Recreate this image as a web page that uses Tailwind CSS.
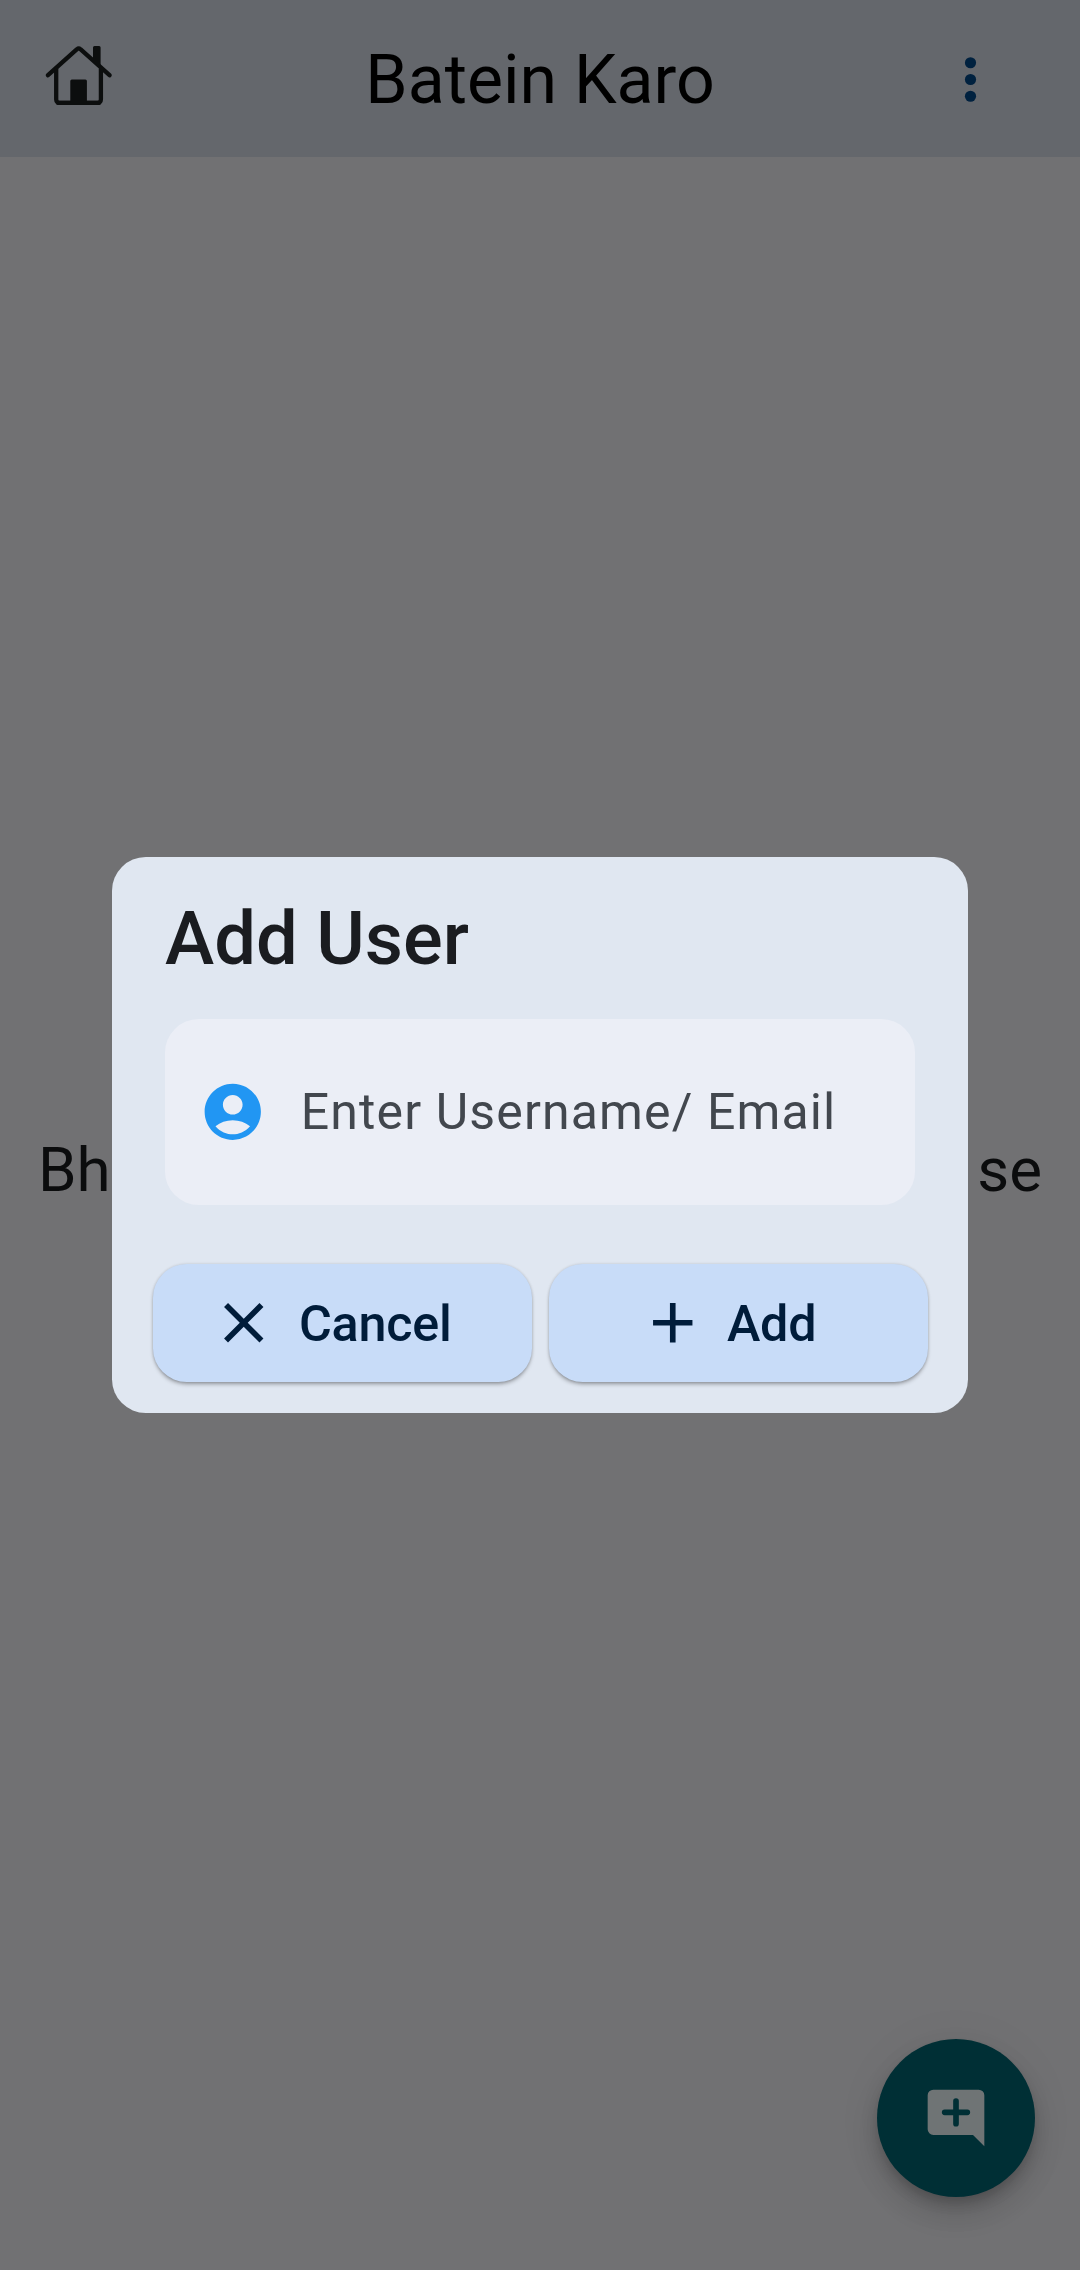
<!DOCTYPE html>
<html lang="en">
<head>
<meta charset="utf-8">
<title>Batein Karo</title>
<script src="https://cdn.jsdelivr.net/npm/@tailwindcss/browser@4"></script>
</head>
<body class="bg-[#717173] font-[Roboto,sans-serif]">
<div class="relative flex h-[2270px] w-[1080px] flex-col overflow-hidden">
  <header class="grid h-[157px] shrink-0 grid-cols-[1fr_auto_1fr] items-center bg-[#64676c]">
    <svg class="ml-[45px] -mt-[6px] size-[68px]" viewBox="45 42 68 68" fill="none" stroke="#0c0e0e" stroke-width="4.3" stroke-linecap="round" stroke-linejoin="round">
      <path d="M48 75.2 77 49.2Q78.7 47.6 80.4 49.2L109.5 75.2"/>
      <path d="M56.2 69v30.5a3.4 3.4 0 0 0 3.4 3.4h37.9a3.4 3.4 0 0 0 3.4-3.4V69"/>
      <path d="M58 102.900H99"/>
      <path fill="#0c0e0e" stroke="none" d="M93 60V47.5a1.5 1.5 0 0 1 1.500-1.500h4.600a1.500 1.500 0 0 1 1.500 1.500V67zM70.300 103V81a1.500 1.500 0 0 1 1.500-1.500h13.600a1.500 1.500 0 0 1 1.500 1.500v22z"/>
    </svg>
    <h1 class="mt-[2px] text-[68px] leading-none text-black">Batein Karo</h1>
    <svg class="mt-[1px] mr-[76px] size-[67px] justify-self-end" viewBox="0 0 24 24" fill="#00213f"><circle cx="12" cy="6" r="2"/><circle cx="12" cy="12" r="2"/><circle cx="12" cy="18" r="2"/></svg>
  </header>
  <main class="flex grow items-center justify-between px-[38px]">
    <span class="-mt-[86px] text-[61.9px] leading-none text-[#0b0c0d]">Bh</span>
    <span class="-mt-[86px] text-[61.9px] leading-none text-[#0b0c0d]">se</span>
  </main>

  <button class="absolute top-[2039px] left-[877px] flex size-[158px] items-center justify-center rounded-full bg-[#002f35] shadow-[0_17px_28px_0_rgba(0,0,0,0.14),0_8px_14px_-3px_rgba(0,0,0,0.2),0_3px_50px_0_rgba(0,0,0,0.05)]">
    <svg class="size-[68px]" viewBox="0 0 24 24"><path fill="#6f7475" d="M4 2h16a2 2 0 0 1 2 2v18l-4-4H4a2 2 0 0 1-2-2V4a2 2 0 0 1 2-2z"/><path d="M8 10h8M12 6v8" stroke="#002f35" stroke-width="2" stroke-linecap="round"/></svg>
  </button>

  <section class="absolute top-[857px] left-[112px] flex h-[556px] w-[856px] flex-col rounded-[33.750px] bg-[#e0e7f1]">
    <h2 class="mt-[45px] ml-[53px] h-[74px] text-[74.200px] leading-[74px] font-medium text-[#1a1c20]">Add User</h2>
    <div class="mt-[43px] ml-[53px] flex h-[186px] w-[750px] items-center rounded-[33.750px] bg-[#ebeef6] pl-[33.750px]">
      <svg class="size-[67.500px]" viewBox="0 0 24 24"><path fill="#2196f3" fill-rule="evenodd" d="M12 2C6.480 2 2 6.480 2 12s4.480 10 10 10 10-4.480 10-10S17.520 2 12 2zm0 4c1.930 0 3.500 1.570 3.500 3.500S13.930 13 12 13s-3.500-1.570-3.500-3.500S10.070 6 12 6zm0 14c-2.030 0-4.430-.820-6.140-2.880C7.550 15.800 9.680 15 12 15s4.450.800 6.140 2.120C16.430 19.180 14.030 20 12 20z"/></svg>
      <span class="ml-[34.500px] text-[50px] leading-none tracking-[1.130px] whitespace-nowrap text-[#42474e]">Enter Username/ Email</span>
    </div>
    <div class="mt-[59px] ml-[41px] flex gap-[17px]">
      <button class="flex h-[118px] w-[379px] items-center rounded-[33.750px] bg-[#c8dcf8] pl-[57px] text-[#001c3a] shadow-[0_3px_4px_-1px_rgba(0,0,0,0.35),0_0_3px_rgba(0,0,0,0.150)]">
        <svg class="size-[67.500px]" viewBox="0 0 24 24" fill="currentColor"><path d="M19 6.410 17.590 5 12 10.590 6.410 5 5 6.410 10.590 12 5 17.590 6.410 19 12 13.410 17.590 19 19 17.590 13.410 12z"/></svg>
        <span class="mt-[3px] ml-[21.500px] text-[50.300px] leading-none font-medium tracking-[-0.250px]">Cancel</span>
      </button>
      <button class="flex h-[118px] w-[379px] items-center rounded-[33.750px] bg-[#c8dcf8] pl-[89.500px] text-[#001c3a] shadow-[0_3px_4px_-1px_rgba(0,0,0,0.35),0_0_3px_rgba(0,0,0,0.150)]">
        <svg class="size-[67.500px]" viewBox="0 0 24 24" fill="currentColor"><path d="M19 13h-6v6h-2v-6H5v-2h6V5h2v6h6v2z"/></svg>
        <span class="mt-[3px] ml-[21px] text-[50.300px] leading-none font-medium tracking-[-0.250px]">Add</span>
      </button>
    </div>
  </section>
</div>
</body>
</html>
